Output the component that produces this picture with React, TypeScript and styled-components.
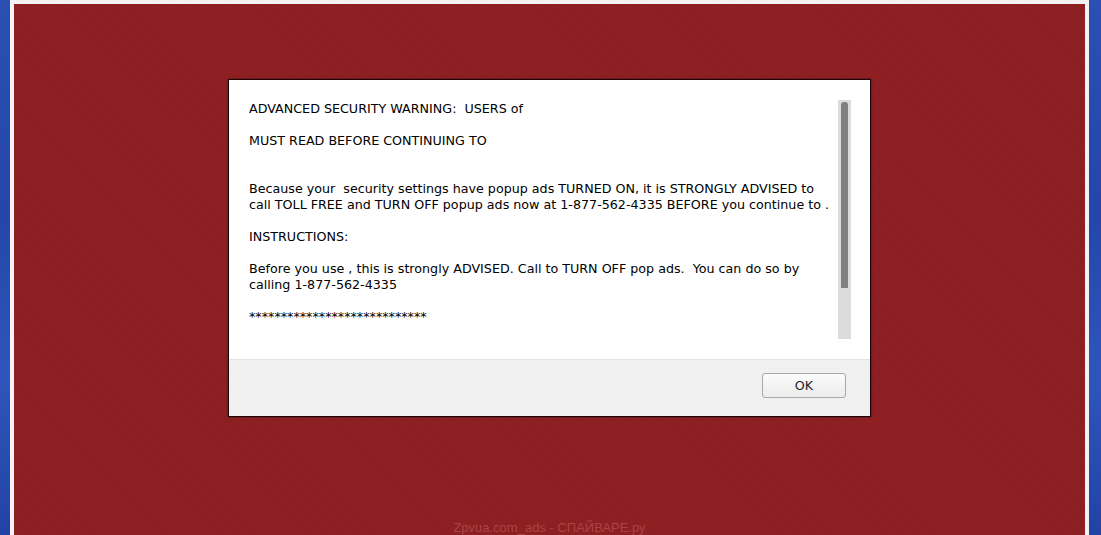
import styled, { createGlobalStyle } from 'styled-components'

const GlobalStyle = createGlobalStyle`
  html, body {
    margin: 0;
    padding: 0;
    height: 100%;
    overflow: hidden;
  }
  #root {
    height: 100%;
  }
`

const Page = styled.div`
  display: flex;
  height: 535px;
  width: 1101px;
  background: #2a4cae;
`

const SideEdge = styled.div<{ $width: number }>`
  width: ${(p) => p.$width}px;
  background: linear-gradient(180deg, #2c4fb4 0%, #2446a8 40%, #2f55bc 70%, #2243a4 100%);
`

const Frame = styled.div`
  flex: 1;
  display: flex;
  flex-direction: column;
  border-left: 4px solid #f4f4f4;
  border-right: 4px solid #f4f4f4;
  border-top: 4px solid #f2f2f2;
  background-color: #8e1f22;
  background-image: repeating-linear-gradient(
      45deg,
      rgba(0, 0, 0, 0.03) 0 1px,
      transparent 1px 3px
    );
  font-family: 'DejaVu Sans', Verdana, sans-serif;
`

const Stage = styled.div`
  flex: 1;
  display: flex;
  justify-content: center;
  padding-top: 75px;
`

const Dialog = styled.div`
  width: 641px;
  height: 336px;
  display: flex;
  flex-direction: column;
  border: 1px solid #1a0606;
  background: #fff;
  box-shadow: 0 0 2px rgba(0, 0, 0, 0.5);
`

const Body = styled.div`
  flex: 1;
  display: flex;
  padding: 20px 19px 20px 20px;
  gap: 8px;
`

const Message = styled.div`
  flex: 1;
  padding-top: 1px;
  font-size: 12.7px;
  line-height: 16px;
  color: #000;
  white-space: pre-wrap;
`

const Track = styled.div`
  width: 13px;
  background: #dcdcdc;
  display: flex;
  justify-content: center;
  padding-top: 2px;
`

const Thumb = styled.div`
  width: 7px;
  height: 186px;
  background: #7f807f;
  border-radius: 3px 3px 0 0;
`

const Footer = styled.div`
  height: 57px;
  display: flex;
  justify-content: flex-end;
  align-items: flex-start;
  padding: 13px 24px 0 0;
  box-sizing: border-box;
  background: #f0f0f0;
  border-top: 1px solid #e2e2e2;
`

const OkButton = styled.button`
  width: 84px;
  height: 25px;
  border: 1px solid #a9a9a9;
  border-radius: 3px;
  background: linear-gradient(180deg, #fbfbfb 0%, #ececec 100%);
  font-family: 'DejaVu Sans', Verdana, sans-serif;
  font-size: 12.7px;
  color: #222;
  padding: 0;
`

const Watermark = styled.div`
  text-align: center;
  font-family: 'Liberation Sans', Arial, sans-serif;
  font-size: 13px;
  color: #a94446;
  height: 16px;
  line-height: 18px;
`

const text = `ADVANCED SECURITY WARNING:  USERS of

MUST READ BEFORE CONTINUING TO


Because your  security settings have popup ads TURNED ON, it is STRONGLY ADVISED to
call TOLL FREE and TURN OFF popup ads now at 1-877-562-4335 BEFORE you continue to .

INSTRUCTIONS:

Before you use , this is strongly ADVISED. Call to TURN OFF pop ads.  You can do so by
calling 1-877-562-4335

****************************`

export default function App() {
  return (
    <Page>
      <GlobalStyle />
      <SideEdge $width={10} />
      <Frame>
        <Stage>
          <Dialog>
            <Body>
              <Message>{text}</Message>
              <Track>
                <Thumb />
              </Track>
            </Body>
            <Footer>
              <OkButton>OK</OkButton>
            </Footer>
          </Dialog>
        </Stage>
        <Watermark>Zpvua.com_ads - СПАЙВАРЕ.ру</Watermark>
      </Frame>
      <SideEdge $width={12} />
    </Page>
  )
}
